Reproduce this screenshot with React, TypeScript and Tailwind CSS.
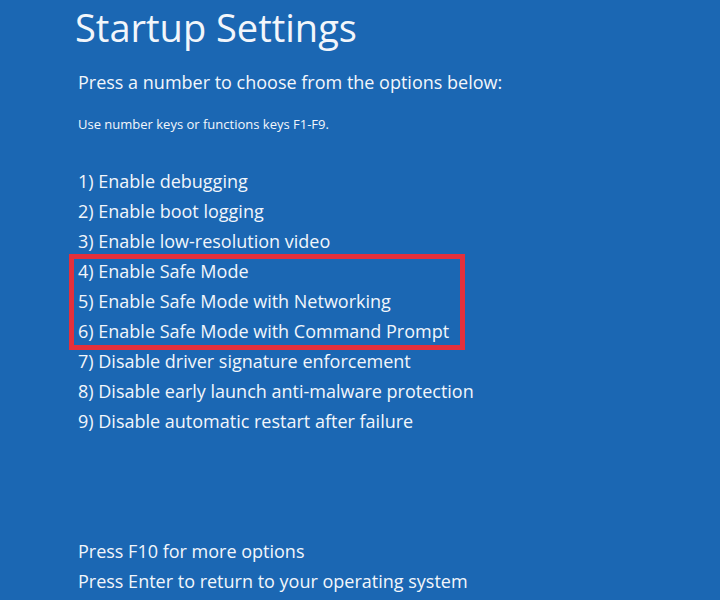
const options = [
  "1) Enable debugging",
  "2) Enable boot logging",
  "3) Enable low-resolution video",
  "4) Enable Safe Mode",
  "5) Enable Safe Mode with Networking",
  "6) Enable Safe Mode with Command Prompt",
  "7) Disable driver signature enforcement",
  "8) Disable early launch anti-malware protection",
  "9) Disable automatic restart after failure",
];

export default function App() {
  return (
    <main className="flex h-[600px] w-[720px] flex-col overflow-hidden bg-[#1b67b3] pl-[78px] font-['Open_Sans',sans-serif] text-[#f2f6fb]">
      <h1 className="-ml-[3px] mt-[1px] text-[38px] leading-[52px] font-normal">Startup Settings</h1>
      <p className="mt-[15px] text-[18px] leading-[28px]">Press a number to choose from the options below:</p>
      <p className="mt-[20px] text-[13px] leading-[17px]">Use number keys or functions keys F1-F9.</p>

      <div className="relative mt-[33px]">
        <ul className="flex flex-col">
          {options.map((o) => (
            <li key={o} className="text-[18px] leading-[30px]">
              {o}
            </li>
          ))}
        </ul>
        <div className="pointer-events-none absolute left-[-9px] top-[88px] h-[96px] w-[396px] border-[5px] border-[#e4303b]" />
      </div>

      <div className="mt-auto mb-[4px] flex flex-col">
        <p className="text-[18px] leading-[30px]">Press F10 for more options</p>
        <p className="text-[18px] leading-[30px]">Press Enter to return to your operating system</p>
      </div>
    </main>
  );
}
